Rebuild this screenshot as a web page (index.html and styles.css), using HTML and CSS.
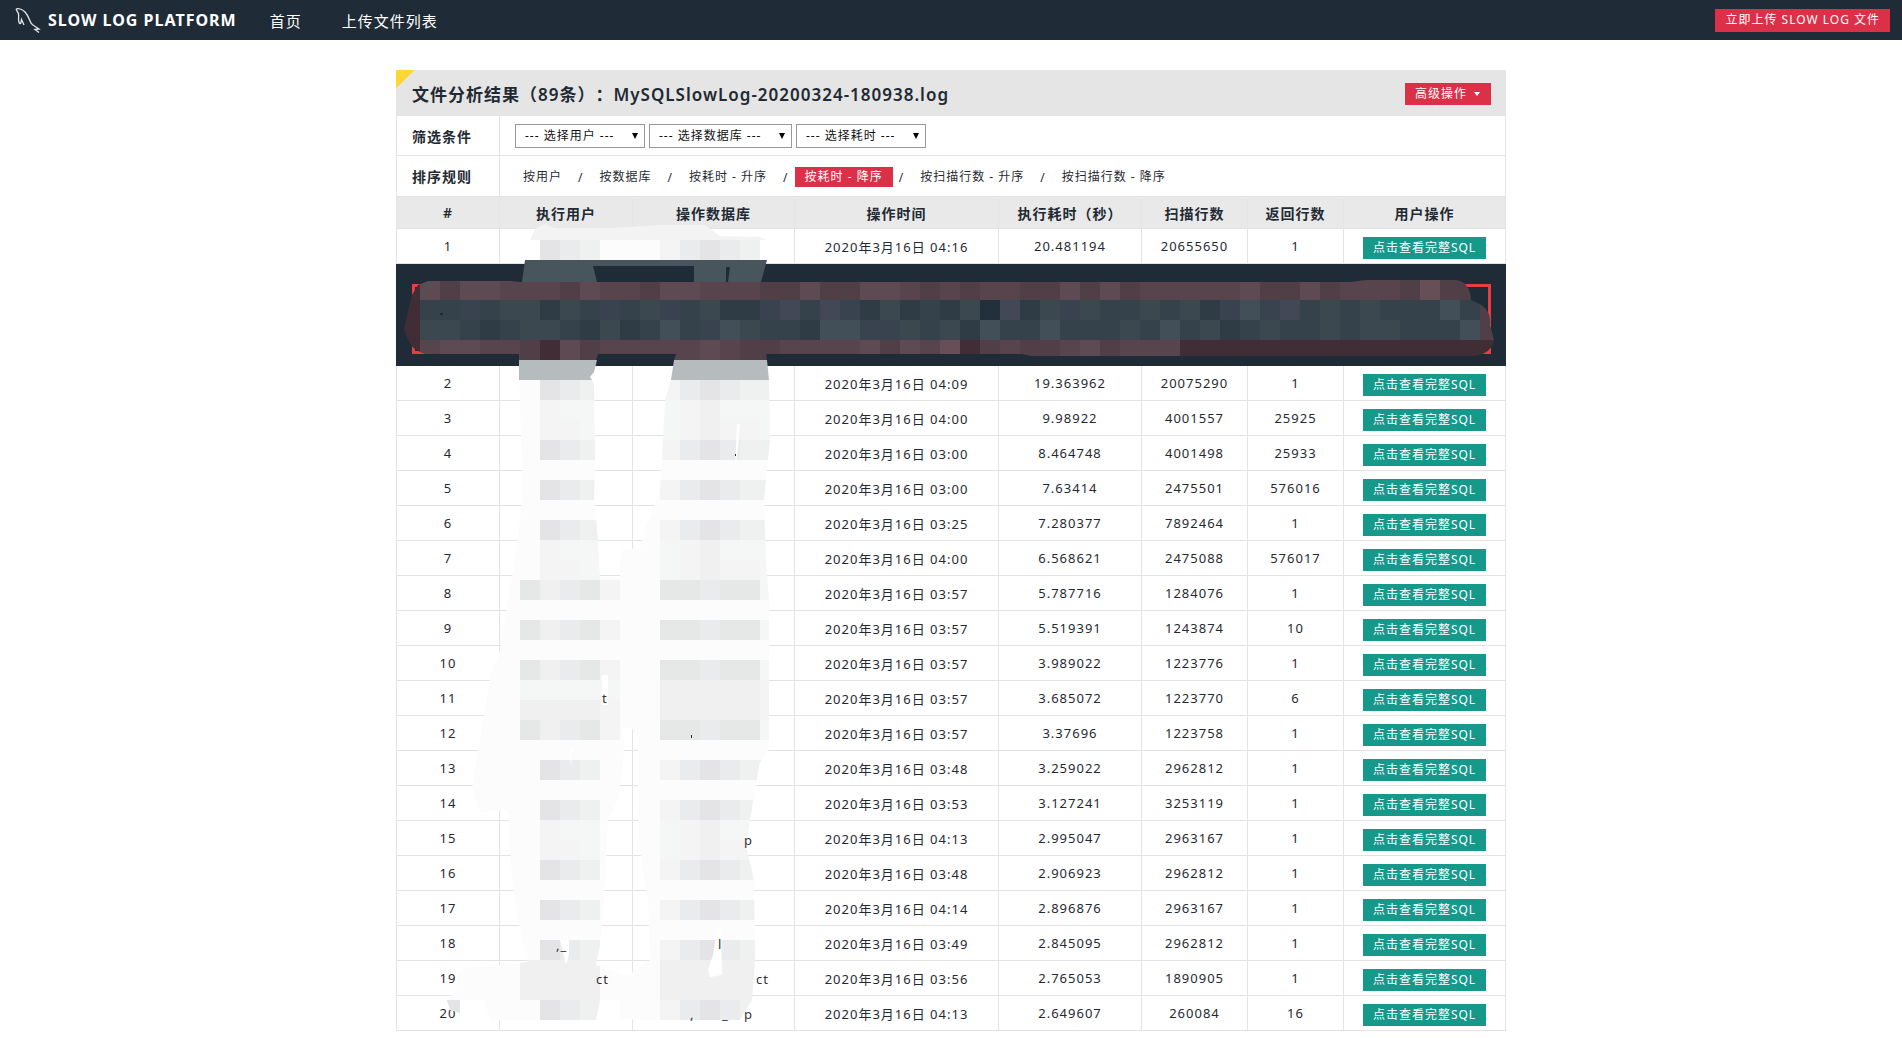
FILE: index.html
```html
<!DOCTYPE html>
<html lang="zh-CN">
<head>
<meta charset="utf-8">
<title>Slow Log Platform</title>
<link rel="stylesheet" href="styles.css">
</head>
<body>
<header class="navbar">
  <a class="brand" href="#">
    <svg class="brand-icon" viewBox="0 0 26 26" aria-hidden="true"><path d="M1 2C3 1 7 2 10 5c3 3 4 7 6 11 1 2 3 3 5 4l3 2-4 .5 4 3M1 2c1 2 2 3 2.500 5 .5 3-.5 5 .5 8 .5 2 1.500 2 2 .5l.5-3L9 18"/></svg>
    <span>SLOW LOG PLATFORM</span>
  </a>
  <nav class="nav-links"><a href="#">首页</a><a href="#">上传文件列表</a></nav>
  <button class="btn btn-red upload" type="button">立即上传 SLOW LOG 文件</button>
</header>

<main class="panel">
  <div class="panel-title">
    <h1>文件分析结果（89条）：MySQLSlowLog-20200324-180938.log</h1>
    <button class="btn btn-red menu" type="button">高级操作</button>
  </div>
  <div class="option-row">
    <div class="option-label">筛选条件</div>
    <div class="filters">
      <span class="select"><select aria-label="选择用户"><option>--- 选择用户 ---</option></select></span>
      <span class="select wide"><select aria-label="选择数据库"><option>--- 选择数据库 ---</option></select></span>
      <span class="select"><select aria-label="选择耗时"><option>--- 选择耗时 ---</option></select></span>
    </div>
  </div>
  <div class="option-row">
    <div class="option-label">排序规则</div>
    <div class="sorts">
      <a href="#">按用户</a><span>/</span><a href="#">按数据库</a><span>/</span><a href="#">按耗时 - 升序</a><span>/</span><a class="active" href="#">按耗时 - 降序</a><span>/</span><a href="#">按扫描行数 - 升序</a><span>/</span><a href="#">按扫描行数 - 降序</a>
    </div>
  </div>
  <table class="log-table">
    <colgroup><col class="c-index"><col class="c-user"><col class="c-db"><col class="c-time"><col class="c-cost"><col class="c-scan"><col class="c-rows"><col class="c-action"></colgroup>
    <thead><tr><th>#</th><th>执行用户</th><th>操作数据库</th><th>操作时间</th><th>执行耗时（秒）</th><th>扫描行数</th><th>返回行数</th><th>用户操作</th></tr></thead>
    <tbody id="log-rows"></tbody>
  </table>
  <svg class="mask" viewBox="396 70 1110 968" aria-hidden="true">
    <defs>
      <clipPath id="clip-user"><path d="M519 380H592L594 385 595 460 594 500 598 540 600 578H620L622 730 625 745 618 800 608 820 604 900 600 945 596 965 640 980V1000H600L596 1020H490L484 1000H460V1013L450 1010 447 1000 456 990 458 974 464 968 528 962 520 930 512 880 510 840 508 810 480 812 472 790 480 740 490 680 500 650 508 600 515 560 520 520 523 490Z"/></clipPath>
      <clipPath id="clip-db"><path d="M671 380H769L770 440 764 500 766 560 769 600V750L760 762 755 790 750 820 746 845 754 880 755 960 752 1000 740 1020H640L618 1018 622 980 650 960 648 900 640 850 638 800V740L632 728H622L618 578 622 550 640 548 645 530 660 490 663 440 665 400Z"/></clipPath>
      <clipPath id="clip-sql"><path d="M404 330L407 315 412 295 418 285 428 281H512L520 282H1350L1366 280H1456Q1470 282 1471 300L1480 304Q1492 312 1490 325L1494 340Q1492 353 1475 356H1031L1022 354H766L767 360H674L676 354H598L596 360H519V354H425Q414 350 410 344Z"/></clipPath>
    </defs>
    <path fill="#f3f3f3" d="M530 240L535 229 545 224 555 228 610 228 660 225H705L720 236 760 237 766 240Z"/>
    <g id="mask-first"></g>
    <g id="mask-user" clip-path="url(#clip-user)"></g>
    <g id="mask-db" clip-path="url(#clip-db)"></g>
    <g id="mask-sql" clip-path="url(#clip-sql)"></g>
    <path fill="#49555d" d="M525 260H767L761 282H728L730 267H726V282H694V266H593L597 282H522Z"/>
    <path fill="#b6bcbe" d="M519 360H597L594 372 590 377 592 380H519ZM674 360H767L769 380H671Z"/>
    <path fill="#fff" d="M737 424L740 424 738 448 735 470ZM560 940L569 940 569 955 566 965ZM717 930L721 930 722 975 710 977 708 970 713 955ZM602 675H608V705H602ZM570 750L573 750 571 765Z"/>
    <g class="fragments">
      <text x="602" y="703">t</text><text x="744" y="845">p</text>
      <text x="556" y="950">,_</text><text x="718" y="949">l</text>
      <text x="596" y="984">ct</text><text x="756" y="984">ct</text>
      <text x="722" y="1019">_</text><text x="744" y="1019">p</text><text x="690" y="1019">,</text>
    </g>
    <path fill="#1e2a33" d="M440 313h3v2h-3zM735 454h1v2h-1zM691 735h1v3h-1z"/>
  </svg>
</main>
<script src="script.js"></script>
</body>
</html>
```
FILE: styles.css
```css
* { box-sizing: border-box; }

body {
  margin: 0;
  background: #fff;
  color: #1f2a33;
  font-family: "Noto Sans", "Noto Sans CJK SC", sans-serif;
  font-size: 12px;
  letter-spacing: 1px;
}

a { color: inherit; text-decoration: none; }

.navbar {
  display: flex;
  align-items: center;
  height: 40px;
  padding: 0 12px 0 15px;
  background: #1f2c37;
  color: #fff;
}

.brand {
  display: flex;
  align-items: center;
  gap: 7px;
  font-size: 16px;
  font-weight: 700;
}

.brand-icon {
  width: 26px;
  height: 26px;
  fill: none;
  stroke: #e3e8ea;
  stroke-width: 1.3;
}

.nav-links {
  display: flex;
  gap: 40px;
  margin-left: 33px;
  font-size: 15px;
}

.btn {
  height: 22px;
  padding: 0 10px;
  border: 0;
  color: #fff;
  font: inherit;
  letter-spacing: inherit;
  line-height: 22px;
  white-space: nowrap;
  cursor: pointer;
}

.btn-red { background: #dc3048; }
.btn-teal { background: #16998a; }
.upload { height: 23px; margin-left: auto; }

.panel {
  position: relative;
  max-width: 1110px;
  margin: 30px auto 0;
}

.panel-title {
  display: flex;
  align-items: center;
  justify-content: space-between;
  height: 46px;
  padding: 0 15px 0 16px;
  background: linear-gradient(135deg, #fdd835 13px, #e5e5e5 13px);
}

.panel-title h1 {
  margin: 0;
  font-size: 17px;
  font-weight: 600;
  text-spacing-trim: space-all;
}

.menu {
  display: flex;
  align-items: center;
  gap: 7px;
  margin-top: 2px;
}

.menu::after {
  content: "";
  margin-right: 1px;
  border: 3px solid transparent;
  border-top: 4px solid #fff;
  border-bottom: 0;
}

.option-row {
  display: grid;
  grid-template-columns: 103px 1fr;
  height: 40px;
  border: 1px solid #e1e3e4;
  border-width: 0 1px 1px;
}

.option-row + .option-row { border-bottom: 0; }

.option-label {
  display: flex;
  align-items: center;
  padding-left: 15px;
  border-right: 1px solid #e1e3e4;
  font-size: 14px;
  font-weight: 600;
}

.filters, .sorts {
  display: flex;
  align-items: center;
}

.filters { gap: 4px; padding-left: 15px; }
.sorts { gap: 6px; padding: 2px 0 0 13px; }

.sorts a { padding: 0 10px; line-height: 20px; }
.sorts .active { background: #dc3048; color: #fff; }

.select { position: relative; width: 130px; }
.select.wide { width: 143px; }

.select::after {
  content: "";
  position: absolute;
  top: 9px;
  right: 7px;
  border: 3px solid transparent;
  border-top: 6px solid #000;
  border-bottom: 0;
  pointer-events: none;
}

.select select {
  display: block;
  width: 100%;
  height: 24px;
  padding: 0 9px;
  border: 1px solid #999;
  border-radius: 0;
  background: #fff;
  color: #111;
  font: inherit;
  letter-spacing: inherit;
  appearance: none;
}

.log-table {
  width: 100%;
  border-collapse: collapse;
  table-layout: fixed;
  text-align: center;
  font-size: 13px;
}

.c-index { width: 103px; }
.c-user { width: 133px; }
.c-db { width: 162px; }
.c-time { width: 204px; }
.c-cost { width: 143px; }
.c-scan { width: 106px; }
.c-rows { width: 96px; }

.log-table th, .log-table td {
  height: 35px;
  padding: 0;
  border: 1px solid #e1e3e4;
}

.log-table th {
  height: 32px;
  background: #e9e9e9;
  border-color: #e1e3e4 #e5e5e5;
  font-size: 14px;
  font-weight: 600;
}

.log-table .btn { display: block; margin: 3px auto 0; font-size: 12px; }

.log-table .sql-cell {
  height: 102px;
  padding: 8px 14px 0 15px;
  border-color: #1f2c37;
  background: #1f2c37;
}

.sql-box {
  height: 70px;
  border: 3px solid #e83e42;
}

.mask {
  position: absolute;
  top: 0;
  left: 0;
  width: 1110px;
  height: 968px;
  pointer-events: none;
}

.fragments {
  fill: #333;
  font-size: 13px;
}
```
FILE: script.js
```js
const logs = [
  ["04:16", "20.481194", "20655650", "1"],
  ["04:09", "19.363962", "20075290", "1"],
  ["04:00", "9.98922", "4001557", "25925"],
  ["03:00", "8.464748", "4001498", "25933"],
  ["03:00", "7.63414", "2475501", "576016"],
  ["03:25", "7.280377", "7892464", "1"],
  ["04:00", "6.568621", "2475088", "576017"],
  ["03:57", "5.787716", "1284076", "1"],
  ["03:57", "5.519391", "1243874", "10"],
  ["03:57", "3.989022", "1223776", "1"],
  ["03:57", "3.685072", "1223770", "6"],
  ["03:57", "3.37696", "1223758", "1"],
  ["03:48", "3.259022", "2962812", "1"],
  ["03:53", "3.127241", "3253119", "1"],
  ["04:13", "2.995047", "2963167", "1"],
  ["03:48", "2.906923", "2962812", "1"],
  ["04:14", "2.896876", "2963167", "1"],
  ["03:49", "2.845095", "2962812", "1"],
  ["03:56", "2.765053", "1890905", "1"],
  ["04:13", "2.649607", "260084", "16"]
];

document.getElementById("log-rows").innerHTML = logs.map(([time, cost, scan, rows], i) =>
  `<tr><td>${i + 1}</td><td></td><td></td><td>2020年3月16日 ${time}</td><td>${cost}</td><td>${scan}</td><td>${rows}</td>` +
  `<td><button class="btn btn-teal" type="button">点击查看完整SQL</button></td></tr>` +
  (i === 0 ? `<tr><td class="sql-cell" colspan="8"><div class="sql-box"></div></td></tr>` : "")
).join("");

// Mosaic masks: one letter per 20px tile.
const tiles = {
  a: "#5d4a52", b: "#57444c", c: "#503f47", d: "#402d36", e: "#664f56",
  f: "#3b4850", g: "#35424b", h: "#2f3c45", i: "#38434f", j: "#434856", k: "#22303c", l: "#434f58",
  m: "#e4e3e5", n: "#fcfcfc", o: "#e9ebec", p: "#eff0f0", q: "#f4f4f5", r: "#e6e7e7", s: "#f5f6f6", t: "#f0f0f1"
};

function mosaic(id, x, y, rows) {
  document.getElementById(id).innerHTML = rows.map((row, r) => [...row].map((t, c) =>
    `<rect x="${x + c * 20}" y="${y + r * 20}" width="20" height="20" fill="${tiles[t]}" shape-rendering="crispEdges"/>`
  ).join("")).join("");
}

mosaic("mask-first", 540, 240, ["mopnnnqomop"]);

const N = "nnnnn", A = "nmopn", B = "rtorq", F = "nqssn", G = "nqqsn", L = "ttttn";
const userRows = [A, F, G, A, N, A, N, A, F, G, B, N, B, N, B, "sssss", "ttttq", B, N, A, N, A, F, G, A, N, A, N, A, L, L, A];
mosaic("mask-user", 440, 380, userRows.map((row, i) => (i === 31 ? "mnnn" : "nnnn") + row + "nn"));

const n = "nnnnnn", a = "qomopp", f = "sqtsss", g = "sqtqqs", b = "rrorrs";
const dbRows = [a, f, g, a, n, a, n, a, f, g, b, n, b, n, b, "tttttq", "tttttq", b, n, a, n, a, f, g, a, n, a, n, a, "tttttt", "tttttt", a];
mosaic("mask-db", 620, 380, dbRows.map(row => "nn" + row));

mosaic("mask-sql", 400, 280, [
  "dacaabbbcabbcaabbbccaccaabcbcbbccacacbbbbbaccacbbbceccc",
  "dggigffhfgigfigfhhijgjihfhghfkjhfifggfgfhilijgfgfggglgc",
  "dffghgffghfhglgilfgghlliifgfhlgglgggfglgfhgfggfgffggglc",
  "dbaabbcdacbbbbbabccbbbbacabedcbccbacbbb" + "d".repeat(16)
]);
```
